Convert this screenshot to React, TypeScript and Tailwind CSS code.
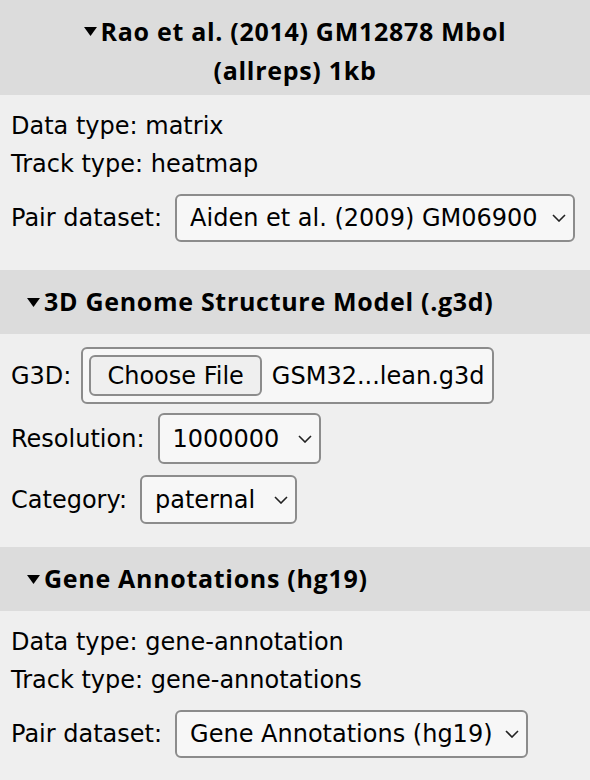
import React from 'react';

const body = { fontFamily: '"DejaVu Sans", "Open Sans", sans-serif' };
const head = { fontFamily: '"Open Sans", "Noto Sans", sans-serif' };

function Caret() {
  return (
    <svg width="13" height="9" viewBox="0 0 13 9" className="shrink-0">
      <polygon points="0,0 13,0 6.5,9" fill="#000" />
    </svg>
  );
}

function Chevron() {
  return (
    <svg width="14" height="8" viewBox="0 0 14 8" className="shrink-0">
      <polyline points="1,1 7,7 13,1" fill="none" stroke="#222" strokeWidth="1.6" />
    </svg>
  );
}

function Select({ value, className }: { value: string; className: string }) {
  return (
    <div
      className={`flex items-center bg-[#f7f7f7] border-2 border-[#8c8c8c] rounded-md pl-[13px] pr-[7px] gap-[12px] ${className}`}
    >
      <span className="flex-1 overflow-hidden whitespace-nowrap">{value}</span>
      <Chevron />
    </div>
  );
}

function Header({ children }: { children: React.ReactNode }) {
  return (
    <div
      className="bg-[#dcdcdc] h-[64px] flex items-center pl-[27px] text-[25px] font-bold tracking-[0.7px] text-black"
      style={head}
    >
      <Caret />
      <span className="ml-[4px]">{children}</span>
    </div>
  );
}

export default function App() {
  return (
    <div className="w-[590px] h-[780px] overflow-hidden bg-[#efefef] text-black text-[24px]" style={body}>
      {/* Matrix track */}
      <div
        className="bg-[#dcdcdc] h-[95px] pt-[12px] text-[25px] font-bold tracking-[0.7px] text-black"
        style={head}
      >
        <div className="h-[39px] flex items-center justify-center gap-[4px]">
          <Caret />
          <span>Rao et al. (2014) GM12878 Mbol</span>
        </div>
        <div className="h-[39px] flex items-center justify-center">(allreps) 1kb</div>
      </div>
      <div className="pl-[11px] pt-[12px] pb-[28px]">
        <div className="h-[38px] flex items-center">Data type: matrix</div>
        <div className="h-[38px] flex items-center">Track type: heatmap</div>
        <div className="flex items-center gap-[13px] mt-[11px]">
          <span>Pair dataset:</span>
          <Select value="Aiden et al. (2009) GM06900" className="w-[400px] h-[48px]" />
        </div>
      </div>

      {/* G3D */}
      <Header>3D Genome Structure Model (.g3d)</Header>
      <div className="pl-[11px] pt-[13px] pb-[23px]">
        <div className="flex items-center gap-[10px]">
          <span>G3D:</span>
          <div className="flex items-center gap-[10px] w-[413px] h-[57px] bg-[#f7f7f7] border-2 border-[#8c8c8c] rounded-md pl-[6px]">
            <div className="h-[41px] px-[16px] flex items-center bg-[#efefef] border-2 border-[#8c8c8c] rounded-md">
              Choose File
            </div>
            <span className="whitespace-nowrap">GSM32...lean.g3d</span>
          </div>
        </div>
        <div className="flex items-center gap-[13px] mt-[9px]">
          <span>Resolution:</span>
          <Select value="1000000" className="w-[163px] h-[51px]" />
        </div>
        <div className="flex items-center gap-[13px] mt-[11px]">
          <span>Category:</span>
          <Select value="paternal" className="w-[157px] h-[49px]" />
        </div>
      </div>

      {/* Gene annotations */}
      <Header>Gene Annotations (hg19)</Header>
      <div className="pl-[11px] pt-[12px]">
        <div className="h-[38px] flex items-center">Data type: gene-annotation</div>
        <div className="h-[38px] flex items-center">Track type: gene-annotations</div>
        <div className="flex items-center gap-[13px] mt-[11px]">
          <span>Pair dataset:</span>
          <Select value="Gene Annotations (hg19)" className="h-[48px]" />
        </div>
      </div>
    </div>
  );
}
